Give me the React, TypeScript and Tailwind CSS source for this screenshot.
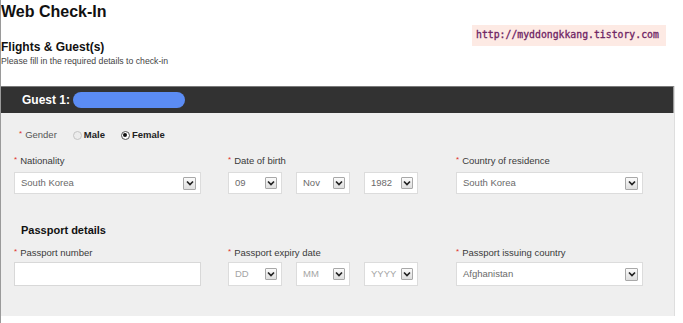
import React from 'react';

const Chevron: React.FC<{ size?: number }> = ({ size = 13 }) => (
  <span
    className="flex items-center justify-center border border-[#a8a8a8] bg-gradient-to-b from-[#fbfbfb] to-[#dedede] rounded-[1px]"
    style={{ width: size, height: size }}
  >
    <svg width="8" height="6" viewBox="0 0 8 6">
      <polyline points="1,1.5 4,4.5 7,1.5" fill="none" stroke="#222" strokeWidth="1.7" />
    </svg>
  </span>
);

const Label: React.FC<{ text: string }> = ({ text }) => (
  <div className="h-[12px] flex items-center text-[9.5px] text-[#3a3a3a] leading-none">
    <span className="text-[#e0302a] text-[8px] mr-[3px] -mt-[2px]">*</span>
    {text}
  </div>
);

const Select: React.FC<{ value: string; width: number; placeholder?: boolean; small?: boolean; h?: number }> = ({
  value,
  width,
  placeholder,
  small,
  h = 22,
}) => (
  <div
    className="bg-white border border-[#dcdcdc] flex items-center justify-between pl-[6px] pr-[4px]"
    style={{ width, height: h }}
  >
    <span className={`text-[9.5px] ${placeholder ? 'text-[#a5a5a5]' : 'text-[#6a6a6a]'}`}>{value}</span>
    <Chevron size={small ? 12 : 13} />
  </div>
);

const Radio: React.FC<{ checked?: boolean }> = ({ checked }) => (
  <span
    className={`w-[9px] h-[9px] rounded-full flex items-center justify-center border ${
      checked ? 'border-[#555] bg-white' : 'border-[#c4c4c4] bg-[#ececec]'
    }`}
  >
    {checked && <span className="w-[4px] h-[4px] rounded-full bg-[#111]" />}
  </span>
);

export default function App() {
  return (
    <div
      className="relative w-[683px] h-[323px] bg-white border-l border-[#9a9a9a] overflow-hidden"
      style={{ fontFamily: '"Liberation Sans", Arial, sans-serif' }}
    >
      <div className="pt-[4px]">
        <h1 className="text-[16px] font-bold leading-[16px] text-[#111]">Web Check-In</h1>
        <h2 className="mt-[20px] text-[12px] font-bold leading-[14px] text-[#111]">Flights &amp; Guest(s)</h2>
        <p className="mt-[2px] text-[8.7px] leading-[10px] text-[#444]">Please fill in the required details to check-in</p>
      </div>

      <div className="absolute left-[471px] top-[25px] w-[194px] h-[21px] bg-[#fdeae4] flex items-center pl-[4px]">
        <span
          className="text-[9.8px] text-[#6e2363]"
          style={{ fontFamily: '"DejaVu Sans Mono", monospace', WebkitTextStroke: '0.3px #6e2363' }}
        >
          http://myddongkkang.tistory.com
        </span>
      </div>

      <div className="mt-[20px] w-[674px] bg-[#efefef] border-r border-[#dedede] pb-[30px]">
        <div className="h-[27px] bg-[#323232] border-t border-[#7a7a7a] border-r border-r-[#9a9a9a] flex items-center pl-[21px]">
          <span className="text-white text-[12px] font-bold">Guest 1:</span>
          <span className="ml-[3px] w-[112px] h-[16px] rounded-full bg-[#5b8cf4]" />
        </div>

        <div className="pt-[16px] pl-[18px] h-[28px] flex items-center text-[9.5px]">
          <span className="text-[#e0302a] text-[8px] mr-[3px] -mt-[2px]">*</span>
          <span className="text-[#555]">Gender</span>
          <span className="ml-[16px] flex items-center gap-[2px]">
            <Radio />
            <span className="font-bold text-[#222]">Male</span>
          </span>
          <span className="ml-[16px] flex items-center gap-[2px]">
            <Radio checked />
            <span className="font-bold text-[#222]">Female</span>
          </span>
        </div>

        <div className="mt-[14px] pl-[13px] flex">
          <div className="w-[214px]">
            <Label text="Nationality" />
            <div className="mt-[5px]">
              <Select value="South Korea" width={187} />
            </div>
          </div>
          <div className="w-[228px]">
            <Label text="Date of birth" />
            <div className="mt-[5px] flex gap-[14px]">
              <Select value="09" width={54} small />
              <Select value="Nov" width={54} small />
              <Select value="1982" width={54} small />
            </div>
          </div>
          <div>
            <Label text="Country of residence" />
            <div className="mt-[5px]">
              <Select value="South Korea" width={187} />
            </div>
          </div>
        </div>

        <h3 className="mt-[29px] pl-[20px] text-[11px] font-bold leading-[14px] text-[#111]">Passport details</h3>

        <div className="mt-[10px] pl-[13px] flex">
          <div className="w-[214px]">
            <Label text="Passport number" />
            <div className="mt-[3px] w-[187px] h-[24px] bg-white border border-[#d8d8d8]" />
          </div>
          <div className="w-[228px]">
            <Label text="Passport expiry date" />
            <div className="mt-[3px] flex gap-[14px]">
              <Select value="DD" width={54} small placeholder h={24} />
              <Select value="MM" width={54} small placeholder h={24} />
              <Select value="YYYY" width={54} small placeholder h={24} />
            </div>
          </div>
          <div>
            <Label text="Passport issuing country" />
            <div className="mt-[3px]">
              <Select value="Afghanistan" width={187} h={24} />
            </div>
          </div>
        </div>
      </div>
    </div>
  );
}
